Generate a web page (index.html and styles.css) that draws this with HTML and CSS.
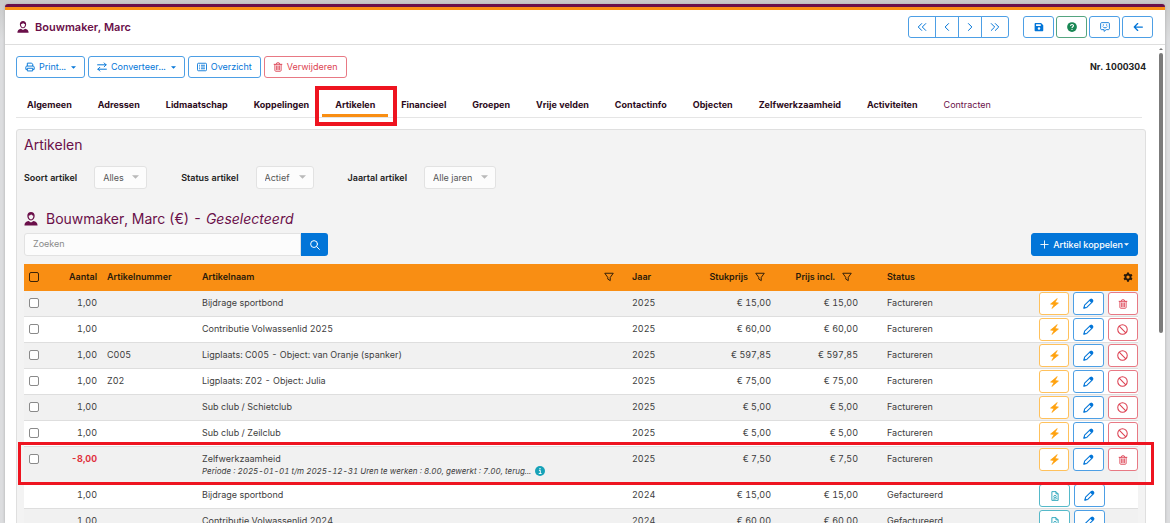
FILE: index.html
```html
<!DOCTYPE html>
<html lang="nl">
<head>
<meta charset="utf-8">
<meta name="viewport" content="width=device-width, initial-scale=1">
<title>Bouwmaker, Marc - Artikelen</title>
<link rel="stylesheet" href="styles.css">
</head>
<body>
<svg class="sprite" aria-hidden="true">
  <symbol id="person" viewBox="0 0 16 16"><path fill="currentColor" fill-rule="evenodd" d="M8 0c2.600 0 4.200 1.800 4.200 4.400S10.500 9.800 8 9.800 3.800 7 3.800 4.400 5.400 0 8 0ZM5.300 4.200C5.300 6.500 6.500 8.400 8 8.400s2.700-1.900 2.700-4.200C9.700 4.200 8.700 3.500 8.200 2.700 7.500 3.500 6.600 4.200 5.300 4.200Z"/><path fill="currentColor" d="M.5 15.500c0-3.100 1.700-4.900 4.700-5.300L8 12l2.800-1.800c3 .4 4.700 2.200 4.700 5.300Z"/></symbol>
  <symbol id="print" viewBox="0 0 16 16"><g fill="none" stroke="currentColor" stroke-width="1.500" stroke-linejoin="round"><path d="M3.700 6.500V1.800h7l1.600 1.600v3.100M3.500 11.800H1.300V8.200c0-1 .7-1.700 1.700-1.700h10c1 0 1.700.7 1.700 1.700v3.600h-2.200"/><path d="M3.700 10h8.600v4.300H3.700z"/></g></symbol>
  <symbol id="swap" viewBox="0 0 16 16"><g fill="none" stroke="currentColor" stroke-width="1.600" stroke-linecap="round" stroke-linejoin="round"><path d="M1 4.500h13.500M11.500 1.500l3 3-3 3M15 11.500H1.500M4.500 8.500l-3 3 3 3"/></g></symbol>
  <symbol id="list" viewBox="0 0 16 16"><rect x=".8" y="2" width="14.400" height="12" rx="1.500" fill="none" stroke="currentColor" stroke-width="1.400"/><path d="M3.300 5.200h1.500M6.300 5.200h6.400M3.300 8h1.500M6.300 8h6.400M3.300 10.800h1.500M6.300 10.800h6.400" stroke="currentColor" stroke-width="1.400"/></symbol>
  <symbol id="trash" viewBox="0 0 16 16"><path d="M1.800 3.700h12.400M5.200 3.500 6.200 1.300h3.600l1 2.200M3 3.900v9.500c0 .8.600 1.400 1.400 1.400h7.200c.8 0 1.400-.6 1.400-1.400V3.900M5.800 6.200v6.200M8 6.200v6.200M10.200 6.200v6.200" fill="none" stroke="currentColor" stroke-width="1.400" stroke-linecap="round"/></symbol>
  <symbol id="left" viewBox="0 0 16 16"><path d="M10.500 2.500 5 8l5.500 5.500" class="line"/></symbol>
  <symbol id="right" viewBox="0 0 16 16"><path d="M5.500 2.500 11 8l-5.500 5.500" class="line"/></symbol>
  <symbol id="dleft" viewBox="0 0 16 16"><path d="M7.500 2.500 2 8l5.500 5.500M14 2.500 8.500 8l5.500 5.500" class="line"/></symbol>
  <symbol id="dright" viewBox="0 0 16 16"><path d="M2 2.500 7.500 8 2 13.500M8.500 2.500 14 8l-5.500 5.500" class="line"/></symbol>
  <symbol id="save" viewBox="0 0 16 16"><path fill="currentColor" fill-rule="evenodd" d="M2.500 1.500h8.800L14.800 5v8c0 .9-.7 1.600-1.600 1.600H2.500c-.8 0-1.500-.7-1.500-1.600V3c0-.8.700-1.500 1.500-1.500ZM3.300 3.500v3h7.500v-3ZM8 8.300a2.100 2.100 0 1 0 0 4.200 2.100 2.100 0 0 0 0-4.200Z"/></symbol>
  <symbol id="help" viewBox="0 0 16 16"><circle cx="8" cy="8" r="7.800" fill="currentColor"/><path d="M5.700 6.300c0-3 4.700-2.800 4.700-.3C10.400 7.500 8 7.600 8 9.400" fill="none" stroke="#fff" stroke-width="1.700"/><circle cx="8" cy="11.700" r="1.100" fill="#fff"/></symbol>
  <symbol id="smile" viewBox="0 0 16 16"><path d="M2.500 1h11c.8 0 1.500.7 1.500 1.500v8.200c0 .8-.7 1.500-1.500 1.500H10L6.500 15v-2.800h-4c-.8 0-1.500-.7-1.500-1.500V2.500C1 1.700 1.700 1 2.500 1ZM4.500 7.300c1.300 2.800 5.700 2.800 7 0" fill="none" stroke="currentColor" stroke-width="1.400" stroke-linejoin="round"/><path d="M4.500 4h2v1.500h-2zM9.500 4h2v1.500h-2z" fill="currentColor"/></symbol>
  <symbol id="back" viewBox="0 0 16 16"><path d="M15 8H2M7.500 2.500 2 8l5.500 5.500" fill="none" stroke="currentColor" stroke-width="2" stroke-linecap="round" stroke-linejoin="round"/></symbol>
  <symbol id="search" viewBox="0 0 16 16"><path d="M10.800 10.800 15 15M12 6.500a5.500 5.500 0 1 1-11 0 5.500 5.500 0 0 1 11 0Z" class="line"/></symbol>
  <symbol id="plus" viewBox="0 0 16 16"><path d="M8 1.500v13M1.500 8h13" class="line"/></symbol>
  <symbol id="filter" viewBox="0 0 16 16"><path d="M1.200 2h13.600L10 8.600v5.200l-4-2.500V8.600Z" fill="none" stroke="currentColor" stroke-width="1.500" stroke-linejoin="round"/></symbol>
  <symbol id="gear" viewBox="0 0 16 16"><path fill="currentColor" fill-rule="evenodd" d="M6.500.6h3l.5 2.300 1.400.8 2.200-.7 1.500 2.600-1.700 1.600v1.600l1.700 1.600-1.500 2.600-2.200-.7-1.400.8-.5 2.300h-3L6 13.100l-1.400-.8-2.200.7L.9 10.400l1.700-1.600V7.200L.9 5.600 2.400 3l2.200.7L6 2.900ZM8 5.400a2.600 2.600 0 1 0 0 5.200 2.600 2.600 0 0 0 0-5.200Z"/></symbol>
  <symbol id="bolt" viewBox="0 0 16 16"><path fill="currentColor" stroke="currentColor" stroke-linejoin="round" d="M12 .8 2.300 8.800l4.900.8L4.200 15.200l9.500-7.800-4.900-.9Z"/></symbol>
  <symbol id="pencil" viewBox="0 0 16 16"><path d="m1.200 14.800 1.100-4.300 8.200-8.200c.7-.7 1.700-.7 2.400 0l.8.8c.7.700.7 1.700 0 2.400l-8.200 8.200Z" fill="none" stroke="currentColor" stroke-width="1.500" stroke-linejoin="round"/><path fill="currentColor" d="m8.800 3.700 2-2c.8-.8 2-.8 2.800 0l.7.7c.8.800.8 2 0 2.800l-2 2ZM.8 15.200l.9-3.600 2.700 2.700Z"/></symbol>
  <symbol id="ban" viewBox="0 0 16 16"><circle cx="8" cy="8" r="6.900" fill="none" stroke="currentColor" stroke-width="1.500"/><path d="m3.200 3.200 9.600 9.600" stroke="currentColor" stroke-width="1.500"/></symbol>
  <symbol id="file" viewBox="0 0 16 16"><path d="M3 1h6.500L13 4.500V15H3ZM9.500 1v3.500H13" fill="none" stroke="currentColor" stroke-width="1.400" stroke-linejoin="round"/><path d="M10 9a2 2 0 1 1-4 0 2 2 0 0 1 4 0ZM9.500 10.500l2 2.300M5 12.800h4" fill="none" stroke="currentColor" stroke-width="1.300"/></symbol>
  <symbol id="info" viewBox="0 0 16 16"><circle cx="8" cy="8" r="8" fill="currentColor"/><path d="M6.300 7h2.200v5M6 12h4.500" fill="none" stroke="#fff" stroke-width="1.500"/><circle cx="8" cy="4.300" r="1.200" fill="#fff"/></symbol>
  <symbol id="caret" viewBox="0 0 8 4"><path d="M0 0h8L4 4Z" fill="currentColor"/></symbol>
</svg>

<div class="window">
  <header class="titlebar">
    <h1 class="title"><svg class="icon-lg"><use href="#person"/></svg>Bouwmaker, Marc</h1>
    <div class="title-actions">
      <div class="pager">
        <button class="btn blue" aria-label="Eerste"><svg class="icon"><use href="#dleft"/></svg></button>
        <button class="btn blue" aria-label="Vorige"><svg class="icon"><use href="#left"/></svg></button>
        <button class="btn blue" aria-label="Volgende"><svg class="icon"><use href="#right"/></svg></button>
        <button class="btn blue" aria-label="Laatste"><svg class="icon"><use href="#dright"/></svg></button>
      </div>
      <div class="tools">
        <button class="btn blue" aria-label="Opslaan"><svg class="icon"><use href="#save"/></svg></button>
        <button class="btn green" aria-label="Help"><svg class="icon"><use href="#help"/></svg></button>
        <button class="btn blue" aria-label="Feedback"><svg class="icon"><use href="#smile"/></svg></button>
        <button class="btn blue" aria-label="Terug"><svg class="icon"><use href="#back"/></svg></button>
      </div>
    </div>
  </header>

  <div class="viewport">
    <main class="content">
      <div class="toolbar">
        <button class="btn blue"><svg class="icon"><use href="#print"/></svg>Print...<svg class="caret"><use href="#caret"/></svg></button>
        <button class="btn blue"><svg class="icon"><use href="#swap"/></svg>Converteer...<svg class="caret"><use href="#caret"/></svg></button>
        <button class="btn blue"><svg class="icon"><use href="#list"/></svg>Overzicht</button>
        <button class="btn red"><svg class="icon"><use href="#trash"/></svg>Verwijderen</button>
        <strong class="number">Nr. 1000304</strong>
      </div>

      <nav class="tabs">
        <a href="#">Algemeen</a>
        <a href="#">Adressen</a>
        <a href="#">Lidmaatschap</a>
        <a href="#">Koppelingen</a>
        <a href="#" class="active" aria-current="page">Artikelen<span class="mark mark-tab"></span></a>
        <a href="#">Financieel</a>
        <a href="#">Groepen</a>
        <a href="#">Vrije velden</a>
        <a href="#">Contactinfo</a>
        <a href="#">Objecten</a>
        <a href="#">Zelfwerkzaamheid</a>
        <a href="#">Activiteiten</a>
        <a href="#" class="light">Contracten</a>
      </nav>

      <section class="panel">
        <h2 class="heading">Artikelen</h2>
        <div class="filters">
          <div class="field"><label for="soort">Soort artikel</label><span class="select"><select id="soort"><option>Alles</option></select><svg><use href="#caret"/></svg></span></div>
          <div class="field"><label for="status">Status artikel</label><span class="select"><select id="status"><option>Actief</option></select><svg><use href="#caret"/></svg></span></div>
          <div class="field"><label for="jaartal">Jaartal artikel</label><span class="select"><select id="jaartal"><option>Alle jaren</option></select><svg><use href="#caret"/></svg></span></div>
        </div>
        <h2 class="heading member"><svg class="icon-xl"><use href="#person"/></svg><span>Bouwmaker, Marc (€) - <em>Geselecteerd</em></span></h2>
        <div class="actions">
          <form class="search"><input type="text" placeholder="Zoeken" aria-label="Zoeken"><button type="button" aria-label="Zoek"><svg class="icon"><use href="#search"/></svg></button></form>
          <button class="btn solid"><svg class="icon-sm"><use href="#plus"/></svg>Artikel koppelen<svg class="caret"><use href="#caret"/></svg></button>
        </div>

        <table class="grid">
          <colgroup><col class="c-check"><col class="c-count"><col class="c-code"><col><col class="c-year"><col class="c-price"><col class="c-price"><col class="c-status"><col class="c-act"></colgroup>
          <thead>
            <tr>
              <th><input type="checkbox" aria-label="Alles selecteren"></th>
              <th class="num">Aantal</th>
              <th>Artikelnummer</th>
              <th><span class="split">Artikelnaam<svg class="icon"><use href="#filter"/></svg></span></th>
              <th>Jaar</th>
              <th class="num"><span class="filtered">Stukprijs<svg class="icon"><use href="#filter"/></svg></span></th>
              <th class="num"><span class="filtered">Prijs incl.<svg class="icon"><use href="#filter"/></svg></span></th>
              <th class="status">Status</th>
              <th class="gear"><svg class="icon"><use href="#gear"/></svg></th>
            </tr>
          </thead>
          <tbody>
            <tr>
              <td><input type="checkbox" aria-label="Selecteer"></td><td class="num">1,00</td><td></td><td>Bijdrage sportbond</td><td>2025</td><td class="num">€ 15,00</td><td class="num">€ 15,00</td><td class="status">Factureren</td>
              <td><div class="row-btns"><button class="btn amber" aria-label="Factureren"><svg class="icon-md"><use href="#bolt"/></svg></button><button class="btn blue" aria-label="Bewerken"><svg class="icon-md"><use href="#pencil"/></svg></button><button class="btn red" aria-label="Verwijderen"><svg class="icon"><use href="#trash"/></svg></button></div></td>
            </tr>
            <tr>
              <td><input type="checkbox" aria-label="Selecteer"></td><td class="num">1,00</td><td></td><td>Contributie Volwassenlid 2025</td><td>2025</td><td class="num">€ 60,00</td><td class="num">€ 60,00</td><td class="status">Factureren</td>
              <td><div class="row-btns"><button class="btn amber" aria-label="Factureren"><svg class="icon-md"><use href="#bolt"/></svg></button><button class="btn blue" aria-label="Bewerken"><svg class="icon-md"><use href="#pencil"/></svg></button><button class="btn red" aria-label="Blokkeren"><svg class="icon-md"><use href="#ban"/></svg></button></div></td>
            </tr>
            <tr>
              <td><input type="checkbox" aria-label="Selecteer"></td><td class="num">1,00</td><td>C005</td><td>Ligplaats: C005 - Object: van Oranje (spanker)</td><td>2025</td><td class="num">€ 597,85</td><td class="num">€ 597,85</td><td class="status">Factureren</td>
              <td><div class="row-btns"><button class="btn amber" aria-label="Factureren"><svg class="icon-md"><use href="#bolt"/></svg></button><button class="btn blue" aria-label="Bewerken"><svg class="icon-md"><use href="#pencil"/></svg></button><button class="btn red" aria-label="Blokkeren"><svg class="icon-md"><use href="#ban"/></svg></button></div></td>
            </tr>
            <tr>
              <td><input type="checkbox" aria-label="Selecteer"></td><td class="num">1,00</td><td>Z02</td><td>Ligplaats: Z02 - Object: Julia</td><td>2025</td><td class="num">€ 75,00</td><td class="num">€ 75,00</td><td class="status">Factureren</td>
              <td><div class="row-btns"><button class="btn amber" aria-label="Factureren"><svg class="icon-md"><use href="#bolt"/></svg></button><button class="btn blue" aria-label="Bewerken"><svg class="icon-md"><use href="#pencil"/></svg></button><button class="btn red" aria-label="Blokkeren"><svg class="icon-md"><use href="#ban"/></svg></button></div></td>
            </tr>
            <tr>
              <td><input type="checkbox" aria-label="Selecteer"></td><td class="num">1,00</td><td></td><td>Sub club / Schietclub</td><td>2025</td><td class="num">€ 5,00</td><td class="num">€ 5,00</td><td class="status">Factureren</td>
              <td><div class="row-btns"><button class="btn amber" aria-label="Factureren"><svg class="icon-md"><use href="#bolt"/></svg></button><button class="btn blue" aria-label="Bewerken"><svg class="icon-md"><use href="#pencil"/></svg></button><button class="btn red" aria-label="Blokkeren"><svg class="icon-md"><use href="#ban"/></svg></button></div></td>
            </tr>
            <tr>
              <td><input type="checkbox" aria-label="Selecteer"></td><td class="num">1,00</td><td></td><td>Sub club / Zeilclub</td><td>2025</td><td class="num">€ 5,00</td><td class="num">€ 5,00</td><td class="status">Factureren</td>
              <td><div class="row-btns"><button class="btn amber" aria-label="Factureren"><svg class="icon-md"><use href="#bolt"/></svg></button><button class="btn blue" aria-label="Bewerken"><svg class="icon-md"><use href="#pencil"/></svg></button><button class="btn red" aria-label="Blokkeren"><svg class="icon-md"><use href="#ban"/></svg></button></div></td>
            </tr>
            <tr class="marked">
              <td><input type="checkbox" aria-label="Selecteer"></td><td class="num negative">-8,00</td><td></td><td>Zelfwerkzaamheid<span class="note">Periode : 2025-01-01 t/m 2025-12-31 Uren te werken : 8.00, gewerkt : 7.00, terug...<svg class="icon"><use href="#info"/></svg></span></td><td>2025</td><td class="num">€ 7,50</td><td class="num">€ 7,50</td><td class="status">Factureren</td>
              <td><div class="row-btns"><button class="btn amber" aria-label="Factureren"><svg class="icon-md"><use href="#bolt"/></svg></button><button class="btn blue" aria-label="Bewerken"><svg class="icon-md"><use href="#pencil"/></svg></button><button class="btn red" aria-label="Verwijderen"><svg class="icon"><use href="#trash"/></svg></button></div><span class="mark mark-row"></span></td>
            </tr>
            <tr>
              <td></td><td class="num">1,00</td><td></td><td>Bijdrage sportbond</td><td>2024</td><td class="num">€ 15,00</td><td class="num">€ 15,00</td><td class="status">Gefactureerd</td>
              <td><div class="row-btns"><button class="btn teal" aria-label="Factuur bekijken"><svg class="icon"><use href="#file"/></svg></button><button class="btn blue" aria-label="Bewerken"><svg class="icon-md"><use href="#pencil"/></svg></button></div></td>
            </tr>
            <tr>
              <td></td><td class="num">1,00</td><td></td><td>Contributie Volwassenlid 2024</td><td>2024</td><td class="num">€ 60,00</td><td class="num">€ 60,00</td><td class="status">Gefactureerd</td>
              <td><div class="row-btns"><button class="btn teal" aria-label="Factuur bekijken"><svg class="icon"><use href="#file"/></svg></button><button class="btn blue" aria-label="Bewerken"><svg class="icon-md"><use href="#pencil"/></svg></button></div></td>
            </tr>
          </tbody>
        </table>
      </section>
    </main>
    <div class="scrollbar" aria-hidden="true"><svg class="scroll-up" viewBox="0 0 8 4"><path d="M0 4h8L4 0Z" fill="#777"/></svg><span class="thumb"></span></div>
  </div>
</div>
</body>
</html>
```

FILE: styles.css
```css
* { box-sizing: border-box; }

body {
  margin: 0;
  height: 100vh;
  overflow: hidden;
  padding: 4px 5px 0;
  background: linear-gradient(#c9c9c9, #dcdddf 40px);
  color: #3d3d3d;
  font: 9px/14px Inter, "Liberation Sans", sans-serif;
  font-variant-numeric: tabular-nums;
}

.sprite { position: absolute; width: 0; height: 0; }
.line { fill: none; stroke: currentColor; stroke-width: 1.6; stroke-linecap: round; stroke-linejoin: round; }
.icon-sm { width: 9px; height: 9px; }
.icon { width: 10px; height: 10px; }
.icon-md { width: 11px; height: 11px; }
.icon-lg { width: 12px; height: 12px; }
.icon-xl { width: 14px; height: 14px; }
.caret { width: 5px; height: 3px; }
svg { flex: none; }

.window {
  display: flex;
  flex-direction: column;
  height: 100%;
  background: #fff;
  border-top: 3px solid #6a0f49;
  border-radius: 3px 3px 0 0;
  box-shadow: 0 0 3px #aaa;
}

.titlebar {
  display: flex;
  align-items: center;
  justify-content: space-between;
  height: 38px;
  flex: none;
  padding: 0 12px;
  border-top: 3px solid #f98e13;
  border-bottom: 1px solid #dedede;
}
.title {
  display: flex;
  align-items: center;
  gap: 6px;
  margin: 0;
  color: #6a0f49;
  font-size: 11px;
  font-weight: 600;
}
.title-actions { display: flex; gap: 14px; }
.pager, .tools { display: flex; }
.tools { gap: 2px; }
.tools .btn { width: 31px; }
.pager .btn { width: 24px; border-radius: 0; margin-left: -1px; }
.pager .btn:first-child { width: 28px; border-radius: 3px 0 0 3px; }
.pager .btn:last-child { width: 28px; border-radius: 0 3px 3px 0; }

.btn {
  display: flex;
  align-items: center;
  justify-content: center;
  gap: 4px;
  height: 22px;
  padding: 0 8px;
  border: 1px solid currentColor;
  border-radius: 3px;
  background: #fff;
  font: inherit;
}
.title-actions .btn, .row-btns .btn { padding: 0; }
.blue { color: #0275d8; border-color: #4d9fe5; }
.red { color: #dc3f50; border-color: #e87984; }
.green { color: #198754; border-color: #55a581; }
.amber { color: #ffa20f; border-color: #ffc15c; }
.teal { color: #1a9fb6; border-color: #55b9c9; }
.solid { color: #fff; background: #0275d8; border-color: #0275d8; font-weight: 500; }

.viewport { display: flex; flex: 1; min-height: 0; }
.content { flex: 1; min-width: 0; overflow: hidden; padding: 11px 9px 0 11px; }

.scrollbar {
  display: flex;
  flex-direction: column;
  align-items: center;
  gap: 3px;
  width: 10px;
  padding: 3px 0 0 2px;
}
.scroll-up { width: 4px; height: 2px; }
.thumb { width: 4px; height: 59%; border-radius: 2px; background: #7b7b7b; }

.toolbar { display: flex; align-items: center; gap: 3px; }
.toolbar .caret { margin-left: 1px; }
.number { margin-left: auto; color: #222; font-weight: 700; }

.tabs {
  display: flex;
  margin-right: 4px;
  margin-top: 14px;
  border-bottom: 1px solid #e5e5e5;
}
.tabs a {
  position: relative;
  padding: 6px 13px 5px;
  color: #2c0a20;
  font-weight: 700;
  text-decoration: none;
  white-space: nowrap;
}
.tabs a:first-child { padding-left: 11px; }
.tabs .active { box-shadow: inset 0 -3px #f98e13; }
.tabs .light { color: #6a0f49; font-weight: 400; }

.mark { position: absolute; border: 4px solid #ee1420; pointer-events: none; z-index: 1; }
.mark-tab { inset: -6px -9px -9px -7px; }
.mark-row { inset: -5px -16px -2px -6px; border-width: 3px; }

.panel {
  margin-top: 11px;
  padding: 7px;
  border: 1px solid #dfdfdf;
  border-radius: 3px;
  background: #f3f3f3;
}
.heading { margin: 0; color: #6a0f49; font-size: 14px; line-height: 16px; font-weight: 400; }
.filters { display: flex; gap: 34px; margin: 13px 0 22px; }
.field { display: flex; align-items: center; gap: 17px; }
.field label { color: #222; font-weight: 600; }
.select { position: relative; display: flex; }
.select select {
  appearance: none;
  height: 23px;
  padding: 0 22px 0 8px;
  border: 1px solid #e2e2e2;
  border-radius: 3px;
  background: #fcfcfc;
  color: #555;
  font: inherit;
}
.select svg { position: absolute; right: 8px; top: 9px; width: 7px; height: 4px; color: #b9b9b9; }
.member { display: flex; align-items: center; gap: 8px; }

.actions { display: flex; justify-content: space-between; margin: 6px 0 8px; }
.search { display: flex; width: 304px; }
.search input {
  flex: 1;
  min-width: 0;
  height: 23px;
  padding: 0 8px 2px;
  border: 1px solid #e2e2e2;
  border-radius: 3px 0 0 3px;
  background: #fcfcfc;
  font: inherit;
}
.search input::placeholder { color: #8a8a8a; }
.search button {
  display: grid;
  place-items: center;
  width: 27px;
  border: 0;
  border-radius: 0 3px 3px 0;
  background: #0275d8;
  color: #fff;
}
.actions .btn { height: 23px; }
.solid .caret { margin-left: -3px; }

.grid { width: 100%; table-layout: fixed; border-collapse: separate; border-spacing: 0; }
.c-check { width: 31px; }
.c-count { width: 47px; }
.c-code { width: 95px; }
.c-year { width: 62px; }
.c-price { width: 87px; }
.c-status { width: 167px; }
.c-act { width: 108px; }
.grid th {
  height: 27px;
  padding: 0 5px 2px;
  background: #f98e13;
  color: #2a1a0a;
  font-weight: 600;
  text-align: left;
}
.grid td { height: 26px; padding: 5px 5px 6px; border-bottom: 1px solid #dedede; background: #fff; vertical-align: top; white-space: nowrap; }
.grid tbody tr:nth-child(odd) td { background: #f1f1f1; }
.grid .num { text-align: right; }
.grid .status { padding-left: 24px; }
.grid .negative { color: #e0303c; font-weight: 700; }
.grid td:last-child { padding: 1px 0 0; }
.grid input { appearance: none; display: block; width: 10px; height: 10px; margin: 2px 0 0; border: 1px solid #8a8a8a; border-radius: 2px; background: #fff; }
.grid th input { margin: 0; border-color: #3a2208; background: transparent; }
.split { display: flex; justify-content: space-between; align-items: center; padding-right: 8px; }
.filtered { display: flex; justify-content: flex-end; align-items: center; gap: 7px; padding-right: 6px; }
.grid .gear { text-align: right; }
.gear svg { display: block; margin-left: auto; }
.row-btns { display: flex; gap: 4px; height: 23px; padding-left: 9px; }
.row-btns .btn { width: 31px; height: 23px; }
.note { display: flex; align-items: center; gap: 4px; height: 10px; font-size: 8px; font-style: italic; }
.note svg { color: #17a2b8; }
.marked { position: relative; }
```
